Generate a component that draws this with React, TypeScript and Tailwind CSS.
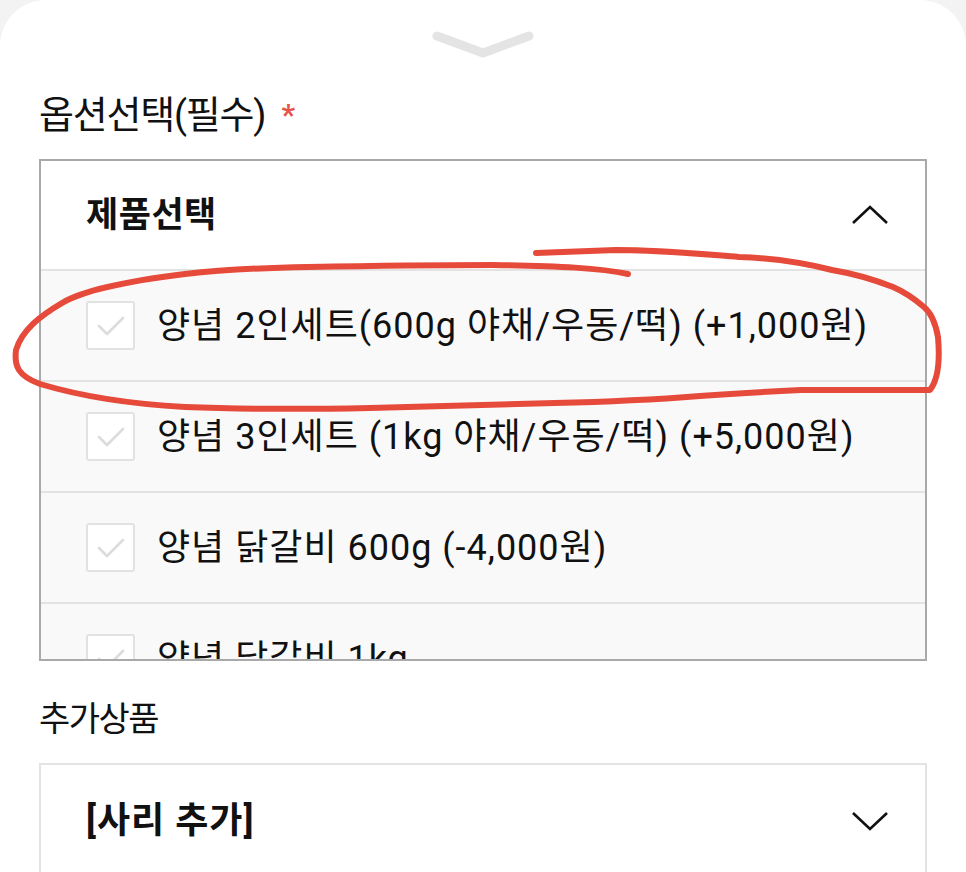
import React from "react";

const options = [
  "양념 2인세트(600g 야채/우동/떡) (+1,000원)",
  "양념 3인세트 (1kg 야채/우동/떡) (+5,000원)",
  "양념 닭갈비 600g (-4,000원)",
  "양념 닭갈비 1kg",
];

function CheckBox() {
  return (
    <div className="w-[49px] h-[49px] shrink-0 rounded-[3px] border-2 border-[#e2e2e2] bg-white flex items-center justify-center">
      <svg width="30" height="22" viewBox="0 0 30 22" fill="none">
        <path d="M3 11 L11 19 L27 3" stroke="#dcdcdc" strokeWidth="2.6" strokeLinecap="round" strokeLinejoin="round" />
      </svg>
    </div>
  );
}

function Chevron({ up }: { up?: boolean }) {
  return (
    <svg width="38" height="22" viewBox="0 0 38 22" fill="none">
      <path
        d={up ? "M2 19 L19 3 L36 19" : "M2 3 L19 19 L36 3"}
        stroke="#111"
        strokeWidth="2.6"
        strokeLinejoin="miter"
      />
    </svg>
  );
}

export default function App() {
  return (
    <div className="min-h-screen bg-[#f3f3f3] font-['Roboto','Noto_Sans_CJK_KR',sans-serif] text-[#111]">
      <div className="relative min-h-screen overflow-hidden rounded-t-[46px] bg-white">
        <div className="flex justify-center pt-[28px]">
          <svg width="104" height="32" viewBox="0 0 104 32" fill="none">
            <path d="M6 8 L52 25 L98 8" stroke="#e4e4e4" strokeWidth="9" strokeLinecap="round" strokeLinejoin="round" />
          </svg>
        </div>

        <div className="px-[39px]">
          <div className="mt-[30px] flex items-center h-[50px] text-[38px] leading-none tracking-[-1.2px]">
            <span>옵션선택(필수)</span>
            <span className="ml-[16px] text-[30px] font-bold text-[#e5534b]">*</span>
          </div>

          <div className="mt-[19px] h-[502px] overflow-hidden border-2 border-[#a9a9a9]">
            <div className="flex h-[110px] items-center justify-between border-b-2 border-[#e3e3e3] pl-[45px] pr-[36px]">
              <span className="text-[35px] font-bold leading-none tracking-[0.5px]">제품선택</span>
              <Chevron up />
            </div>
            {options.map((o) => (
              <div
                key={o}
                className="flex h-[111px] items-center gap-[22px] border-b-2 border-[#e3e3e3] bg-[#f9f9f9] pl-[45px]"
              >
                <CheckBox />
                <span className="text-[36px] leading-none tracking-[1px] whitespace-nowrap">{o}</span>
              </div>
            ))}
          </div>

          <div className="mt-[33px] h-[50px] flex items-center text-[34px] leading-none tracking-[-1.5px]">
            추가상품
          </div>

          <div className="mt-[19px] border-2 border-b-0 border-[#e3e3e3]">
            <div className="flex h-[112px] items-center justify-between pl-[45px] pr-[36px]">
              <span className="text-[36px] font-bold leading-none tracking-[1px]">[사리 추가]</span>
              <Chevron />
            </div>
          </div>
        </div>

        <svg
          className="pointer-events-none absolute left-0 top-0"
          width="966"
          height="872"
          viewBox="0 0 966 872"
          fill="none"
        >
          <path
            d="M628 274 C600 268 560 266 493 265 C420 265 360 266 308 267 C250 268 220 270 185 274 C120 282 80 292 62 303 C40 316 22 330 16 350 C14 366 18 376 40 384 C80 396 130 404 185 407 C260 410 320 409 370 408 C440 406 500 404 555 403 C600 402 650 400 700 396 C740 393 780 391 801 390 L930 390 C938 380 940 360 938 337 C935 320 930 312 924 307 C910 295 900 290 893 287 C870 278 850 273 832 270 C800 262 770 258 739 257 C700 254 660 250 616 250 L536 253"
            stroke="#e64a3b"
            strokeWidth="6"
            strokeLinecap="round"
            strokeLinejoin="round"
          />
        </svg>
      </div>
    </div>
  );
}
